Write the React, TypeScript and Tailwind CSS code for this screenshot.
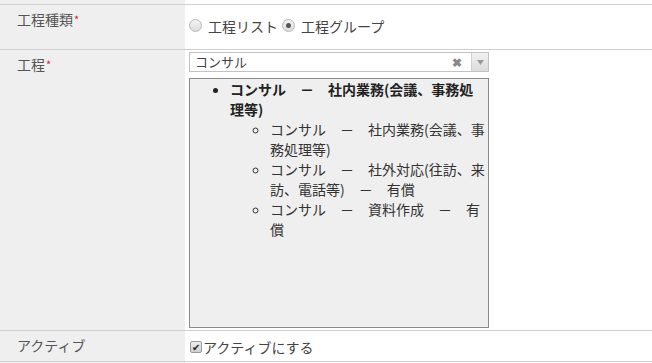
const font = { fontFamily: '"Noto Sans CJK JP", "Noto Sans", sans-serif' };

function Label({ text, required }: { text: string; required?: boolean }) {
  return (
    <div className="bg-[#efefef] pl-[17px] pt-1 text-[14px] leading-[20px] text-[#555]">
      {text}
      {required && <span className="ml-[1px] align-top text-[11px] text-[#d22]">*</span>}
    </div>
  );
}

function Radio({ checked, label }: { checked?: boolean; label: string }) {
  return (
    <label className="inline-flex items-center">
      <span className="flex h-[13px] w-[13px] items-center justify-center rounded-full border border-[#b5b5b5] bg-gradient-to-b from-[#f4f4f4] to-[#dcdcdc]">
        {checked && <span className="h-[5px] w-[5px] rounded-full bg-[#555]" />}
      </span>
      <span className="ml-[6px] text-[14px] leading-[20px] text-[#444]">{label}</span>
    </label>
  );
}

export default function App() {
  return (
    <div className="h-[363px] w-[652px] overflow-hidden bg-white" style={font}>
      <div className="grid grid-cols-[185px_1fr]">
        {/* previous row (cut off) */}
        <div className="h-[4px] bg-[#efefef]" />
        <div className="h-[4px]" />

        {/* 工程種類 */}
        <div className="col-span-2 grid h-[45px] grid-cols-[185px_1fr] border-t border-[#cfcfcf]">
          <Label text="工程種類" required />
          <div className="flex items-center gap-[4px] pb-[3px] pl-1">
            <Radio label="工程リスト" />
            <Radio checked label="工程グループ" />
          </div>
        </div>

        {/* 工程 */}
        <div className="col-span-2 grid h-[281px] grid-cols-[185px_1fr] border-t border-[#cfcfcf]">
          <Label text="工程" required />
          <div className="pl-1 pt-[2px]">
            <div className="flex h-[20px] w-[300px] items-stretch border border-[#c2c2c2] bg-white">
              <span className="flex-1 pl-[5px] text-[13px] leading-[18px] text-[#444]">コンサル</span>
              <span className="mr-[6px] flex w-[16px] items-center justify-center text-[12px] font-bold text-[#888]">✖</span>
              <span className="flex w-[17px] items-center justify-center border-l border-[#d0d0d0] bg-gradient-to-b from-[#f2f2f2] to-[#dcdcdc]">
                <svg width="7" height="5" viewBox="0 0 7 5">
                  <path d="M0 0h7L3.5 5z" fill="#999" />
                </svg>
              </span>
            </div>
            <div className="mt-[6px] h-[250px] w-[300px] overflow-hidden border border-[#8a8a8a] bg-[#efefef] text-[14px] leading-[20px] text-[#333]">
              <ul className="list-disc pl-[40px]">
                <li className="font-bold text-[#222]">
                  <span className="inline-block pr-[6px] align-top">コンサル　－　社内業務(会議、事務処理等)</span>
                  <ul className="list-[circle] pl-[40px] font-normal text-[#333]">
                    <li>コンサル　－　社内業務(会議、事務処理等)</li>
                    <li>コンサル　－　社外対応(往訪、来訪、電話等)　－　有償</li>
                    <li>コンサル　－　資料作成　－　有償</li>
                  </ul>
                </li>
              </ul>
            </div>
          </div>
        </div>

        {/* アクティブ */}
        <div className="col-span-2 grid h-[31px] grid-cols-[185px_1fr] border-t border-[#cfcfcf]">
          <Label text="アクティブ" />
          <div className="flex items-center pl-[5px] pt-[1px]">
            <span className="flex h-[12px] w-[12px] items-center justify-center rounded-[2px] border border-[#9a9a9a] bg-gradient-to-b from-[#eee] to-[#cfcfcf] text-[10px] leading-none text-[#222]">
              ✔
            </span>
            <span className="ml-[1px] text-[14px] leading-[20px] text-[#444]">アクティブにする</span>
          </div>
        </div>

        {/* next row (cut off) */}
        <div className="col-span-2 grid h-[10px] grid-cols-[185px_1fr] border-t border-[#cfcfcf]">
          <div className="bg-[#efefef]" />
          <div />
        </div>
      </div>
    </div>
  );
}
